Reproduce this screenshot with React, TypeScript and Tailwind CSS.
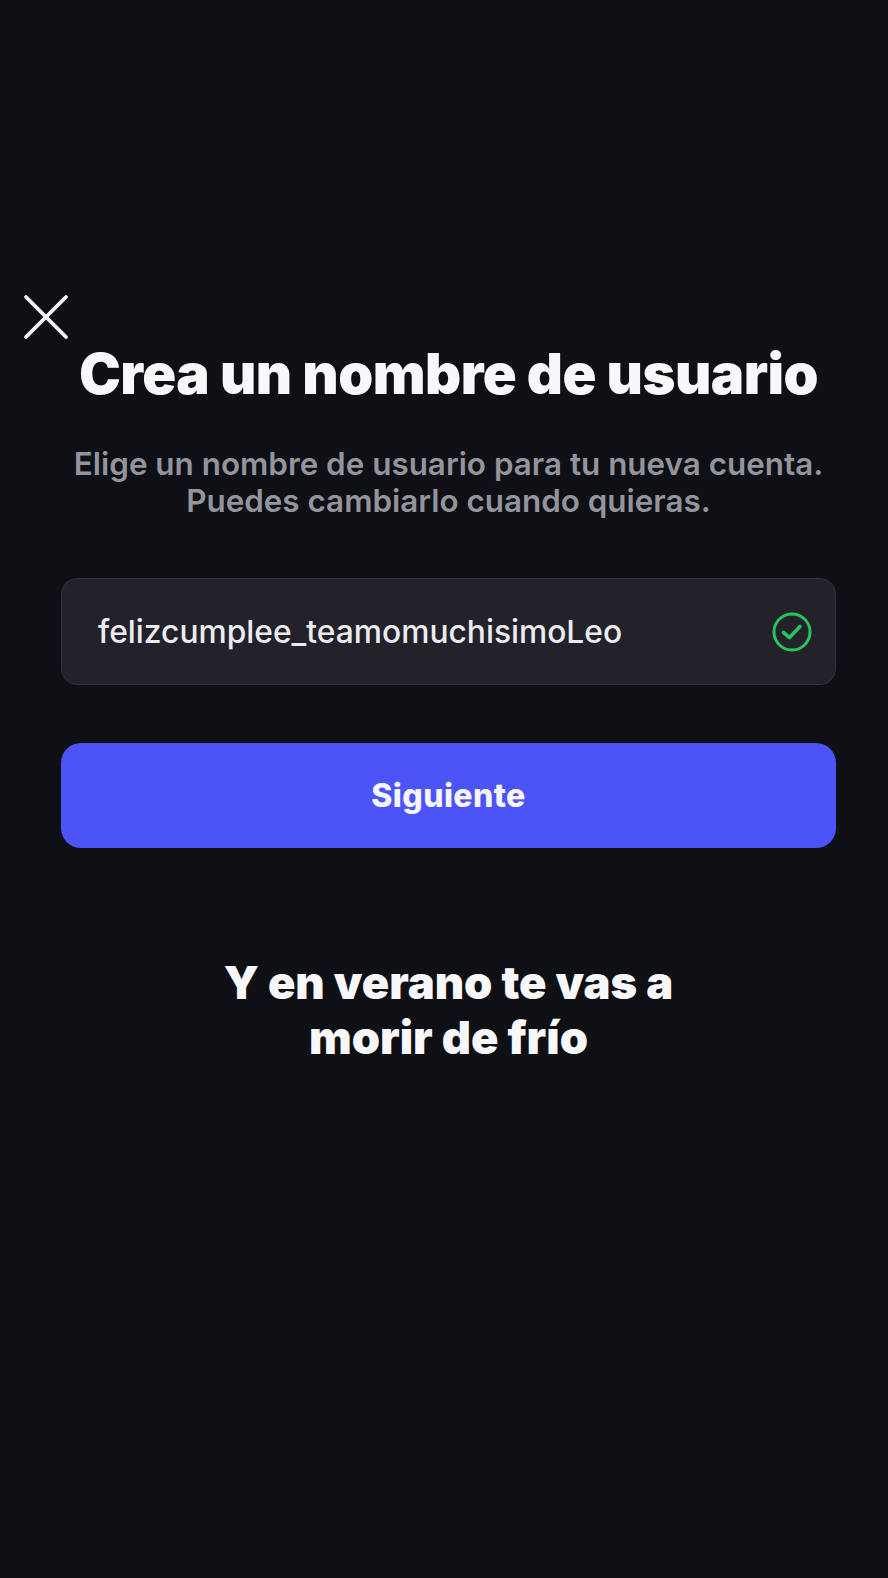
import { X } from 'lucide-react';

const App = () => {
  return (
    <div className="min-h-[1578px] bg-[#0e1015] font-['Inter',sans-serif] pt-[277px]">
      <div className="pl-[6px]">
        <X size={80} strokeWidth={1.15} className="text-[#f4f4f6]" />
      </div>

      <div className="ml-[61px] mr-[52px]">
        <h1 className="mt-[-13px] text-center text-[56px] leading-[60px] font-black tracking-[-0.5px] text-[#f8f8fa]">
          Crea un nombre de usuario
        </h1>

        <p className="mt-[42px] text-center text-[31.4px] leading-[37px] font-semibold text-[#94949c]">
          Elige un nombre de usuario para tu nueva cuenta.
          <br />
          Puedes cambiarlo cuando quieras.
        </p>

        <div className="mt-[58px] flex h-[107px] items-center justify-between rounded-[16px] border border-[#33323c] bg-[#23222b] pl-[36px] pr-[22px]">
          <span className="text-[31.75px] font-medium text-[#ececf0]">felizcumplee_teamomuchisimoLeo</span>
          <svg width="42" height="42" viewBox="0 0 42 42" fill="none" stroke="#22c55e">
            <circle cx="21" cy="21" r="18" strokeWidth="3" />
            <path d="M12.5 21.5 L18.5 26.5 L29 15.5" strokeWidth="3.6" strokeLinecap="round" strokeLinejoin="round" />
          </svg>
        </div>

        <button className="mt-[58px] block h-[105px] w-full rounded-[20px] bg-[#4d54f7] text-center text-[32px] font-extrabold tracking-[0.4px] text-[#f6f6ff]">
          Siguiente
        </button>

        <p className="mt-[107px] text-center text-[45.3px] leading-[55px] font-black text-[#f8f8fa]">
          Y en verano te vas a
          <br />
          morir de frío
        </p>
      </div>
    </div>
  );
};

export default App;
